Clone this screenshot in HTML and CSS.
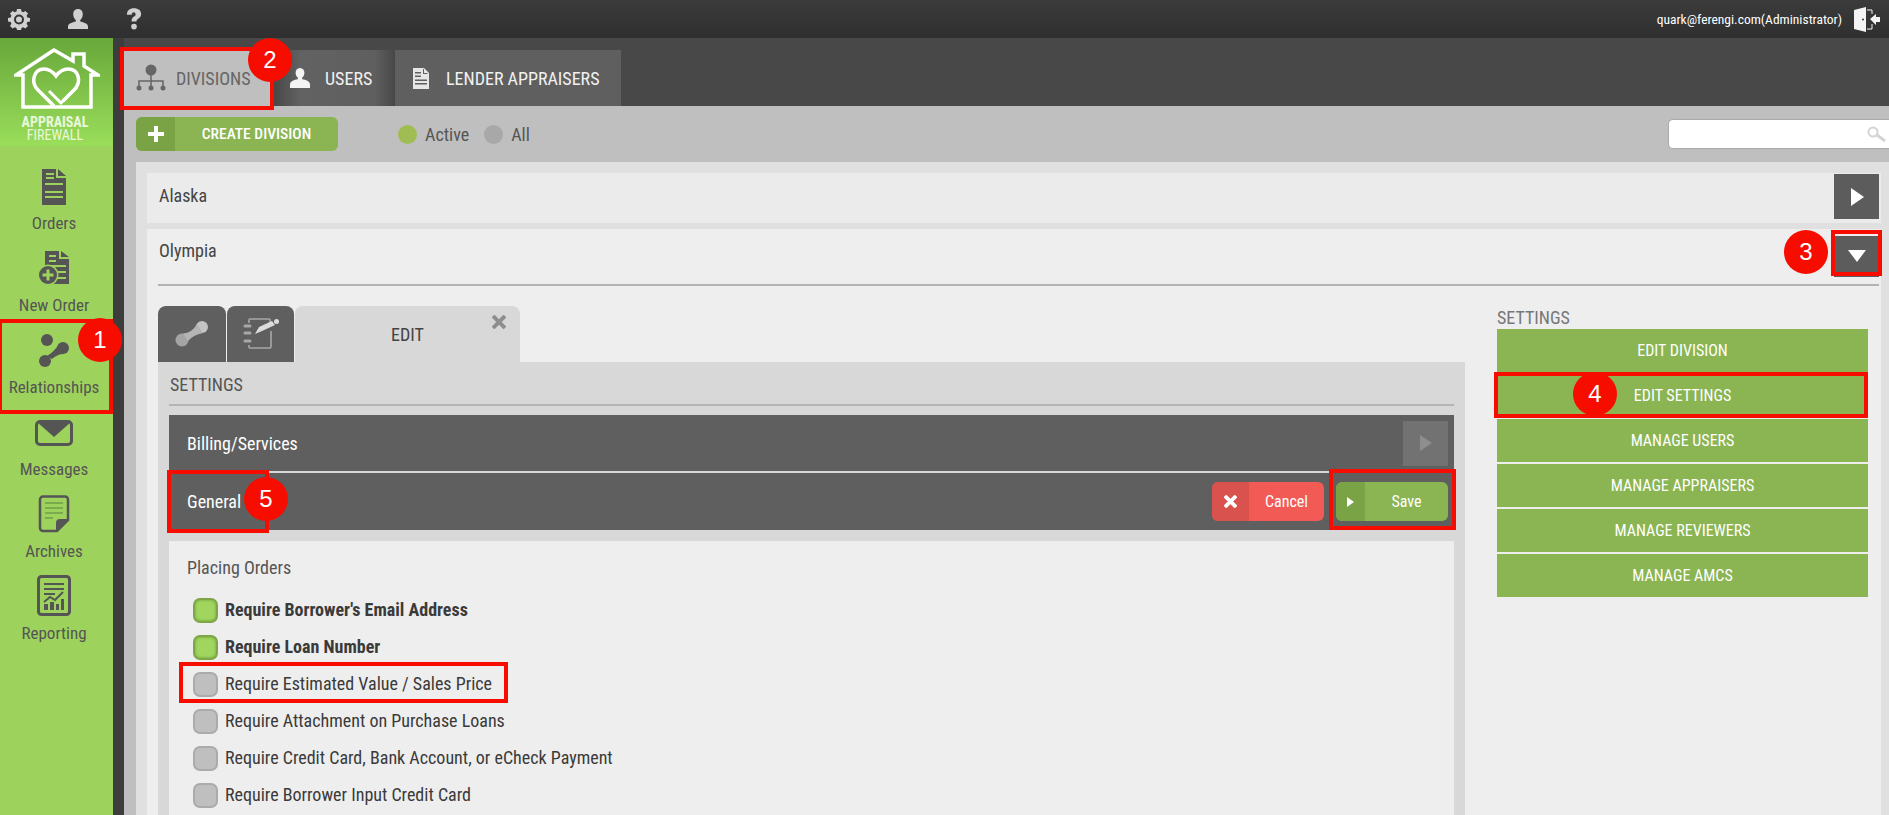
FILE: index.html
```html
<!DOCTYPE html>
<html lang="en">
<head>
<meta charset="utf-8">
<title>Appraisal Firewall - Divisions</title>
<link rel="stylesheet" href="styles.css">
</head>
<body>
<div class="page">
  <header class="topbar">
    <div class="top-icons">
      <svg class="ti" width="22" height="22" viewBox="0 0 22 22"><path fill="#d0d0d0" fill-rule="evenodd" d="M9 1h4l.5 2.600 1.700.7L17.400 3 20 5.600l-1.400 2.200.7 1.700L22 10v3.500l-2.700.5-.7 1.700L20 18l-2.600 2.600-2.200-1.400-1.700.7L13 22H9l-.5-2.100-1.700-.7L4.600 20.600 2 18l1.400-2.300-.7-1.700L0 13.500V10l2.700-.5.7-1.700L2 5.600 4.600 3l2.200 1.300 1.700-.7zM11 6.500a5 5 0 1 0 0 10 5 5 0 0 0 0-10zM11 8.500a3 3 0 1 1 0 6 3 3 0 0 1 0-6z"/></svg>
      <svg class="ti" width="22" height="22" viewBox="0 0 22 22"><path fill="#d0d0d0" d="M11 1c3.300 0 4.800 2.500 4.800 5.200 0 2.500-1.200 4.800-2.600 5.800v1.500c3.500.8 7.800 2 7.800 5v2.500H1V18.500c0-3 4.300-4.200 7.800-5V12C7.400 11 6.200 8.700 6.200 6.200 6.200 3.500 7.700 1 11 1z"/></svg>
      <svg class="ti" width="16" height="22" viewBox="0 0 18 24"><path fill="#d0d0d0" d="M9 0c5 0 8 2.500 8 6.300 0 3-1.700 4.300-3.300 5.500-1.200.9-1.900 1.500-1.900 3H6.200c0-3 1.200-4.300 2.800-5.500 1-.8 1.800-1.400 1.800-2.500S10 4.500 8.800 4.500c-1.500 0-2.300 1-2.400 2.700H1C1.100 2.600 4 0 9 0zM9 17.300a3.200 3.200 0 1 1 0 6.400 3.200 3.200 0 0 1 0-6.400z"/></svg>
    </div>
    <div class="user-info">
      <span class="user-mail">quark@ferengi.com(Administrator)</span>
      <svg width="26" height="25" viewBox="0 0 26 25"><path fill="#f4f4f4" d="M0 3 12 0v25L0 22z"/><path fill="none" stroke="#f4f4f4" stroke-width="1" d="M13 3h5v4M13 22h5v-5"/><path fill="#f4f4f4" d="M16 12l6-5v3h4v5h-4v3z"/><circle cx="9" cy="12.500" r="1" fill="#333"/></svg>
    </div>
  </header>
  <div class="shell">
    <nav class="sidebar">
      <div class="logo">
        <svg width="86" height="63" viewBox="0 0 86 63"><path fill="none" stroke="#fff" stroke-width="3.500" stroke-linejoin="miter" d="M40 3 2 28H9V60H77V28H84L70 19V7H59V14z"/><path fill="none" stroke="#fff" stroke-width="3.500" d="M40 59 24 43C16 35 20 22 30 22 35 22 39 25 42 29 45 25 49 22 54 22 65 22 68 35 60 43L49 54"/><path fill="none" stroke="#fff" stroke-width="3" d="M35 44 47 56 63 40"/></svg>
        <div class="logo-text">APPRAISAL<br>FIREWALL</div>
      </div>
      <a class="nav-item ni-orders">
        <svg width="26" height="38" viewBox="0 0 26 38"><path fill="#555" d="M1 1H15V10H25V37H1z"/><path fill="#555" d="M17 1l8 7h-8z"/><path fill="#9dd25c" d="M5 5h8v2H5zM5 9h8v2H5zM4 15h18v2H4zM4 23h18v2H4zM4 28h18v2H4z"/></svg>
        <span class="nav-label">Orders</span>
      </a>
      <a class="nav-item ni-new">
        <svg width="36" height="36" viewBox="0 0 36 36"><path fill="#555" d="M9 1H23V9H33V34H18V27H9z"/><path fill="#555" d="M25 1l8 6h-8z"/><path fill="#9dd25c" d="M13 5h7v2h-7zM13 10h7v2h-7zM13 15h17v2H13zM21 21h9v2h-9zM21 27h9v2h-9z"/><circle cx="12" cy="25" r="10.500" fill="#9dd25c"/><circle cx="12" cy="25" r="9" fill="#555"/><path fill="#9dd25c" d="M10.500 19.500h3v4h4v3h-4v4h-3v-4h-4v-3h4z"/></svg>
        <span class="nav-label">New Order</span>
      </a>
      <a class="nav-item ni-rel">
        <svg width="32" height="34" viewBox="0 0 32 34"><circle cx="9" cy="6" r="6" fill="#555"/><circle cx="25" cy="14" r="6" fill="#555"/><circle cx="7" cy="27" r="6" fill="#555"/><path fill="#555" d="M21 10c-3 5-7 9-12 12l5 3c3-3 7-5 12-5z"/></svg>
        <span class="nav-label">Relationships</span>
      </a>
      <a class="nav-item ni-msg">
        <svg width="38" height="26" viewBox="0 0 38 26"><rect x="1.500" y="1.500" width="35" height="23" rx="3.500" fill="none" stroke="#555" stroke-width="3"/><path fill="#555" d="M2 2h34L19 17z"/></svg>
        <span class="nav-label">Messages</span>
      </a>
      <a class="nav-item ni-arc">
        <svg width="32" height="38" viewBox="0 0 32 38"><path fill="none" stroke="#555" stroke-width="2.500" d="M5 1.500h22a3 3 0 0 1 3 3V25L19 36H5a3 3 0 0 1-3-3V4.500a3 3 0 0 1 3-3z"/><path fill="#555" d="M30 24 18 36V28a4 4 0 0 1 4-4z"/><path stroke="#6f9f47" stroke-width="1.500" d="M7 8h18M7 13h18M7 18h18M7 23h8"/></svg>
        <span class="nav-label">Archives</span>
      </a>
      <a class="nav-item ni-rep">
        <svg width="34" height="41" viewBox="0 0 34 41"><rect x="1.500" y="1.500" width="31" height="38" rx="3" fill="none" stroke="#555" stroke-width="3"/><path stroke="#555" stroke-width="2" d="M7 9h20M7 14h20M7 19h11"/><path fill="none" stroke="#555" stroke-width="2" d="M7 27l6-5 5 3 8-8"/><path fill="#555" d="M7 29h4v6H7zM13 27h4v8h-4zM19 29h3v6h-3zM24 24h3v11h-3z"/></svg>
        <span class="nav-label">Reporting</span>
      </a>
    </nav>
    <main class="main">
      <div class="tabs">
        <div class="tab tab-active">
          <svg width="30" height="28" viewBox="0 0 30 28"><circle cx="15" cy="6" r="5.500" fill="#666"/><path fill="none" stroke="#666" stroke-width="1.500" d="M15 11v12M3 23v-6h24v6"/><circle cx="3" cy="24" r="2.500" fill="#666"/><circle cx="15" cy="24" r="2.500" fill="#666"/><circle cx="27" cy="24" r="2.500" fill="#666"/></svg>
          <span>DIVISIONS</span>
        </div>
        <div class="tab tab-users">
          <svg width="20" height="20" viewBox="0 0 20 20"><path fill="#f4f4f4" d="M10 0c3 0 4.400 2.200 4.400 4.700 0 2.200-1 4-2.200 4.900v1.600c3.200.6 7.800 1.800 7.800 5.300V20H0v-3.500c0-3.500 4.600-4.700 7.800-5.300V9.600C6.600 8.700 5.600 6.900 5.600 4.700 5.600 2.200 7 0 10 0z"/></svg>
          <span>USERS</span>
        </div>
        <div class="tab tab-lender">
          <svg width="16" height="21" viewBox="0 0 16 21"><path fill="#e6e6e6" d="M0 0h11l5 5v16H0z"/><path fill="#5f5f5f" d="M2 4h6v1.500H2zM2 7.500h6V9H2zM2 11.500h12V13H2zM2 15h12v1.500H2zM11 1v4h4l-1 1h-4V1z"/></svg>
          <span>LENDER APPRAISERS</span>
        </div>
      </div>
      <div class="workspace">
        <div class="toolbar">
          <button class="create-btn"><span class="create-plus"><svg width="16" height="16" viewBox="0 0 16 16"><path fill="#fff" d="M6 0h4v6h6v4h-6v6H6v-6H0V6h6z"/></svg></span><span class="create-text">CREATE DIVISION</span></button>
          <div class="filter">
            <i class="dot dot-on"></i><span class="filter-label">Active</span>
            <i class="dot dot-off"></i><span class="filter-label">All</span>
          </div>
          <div class="search">
            <svg width="20" height="16" viewBox="0 0 20 16"><circle cx="6" cy="6" r="4.500" fill="none" stroke="#d4d4d4" stroke-width="2"/><path stroke="#d4d4d4" stroke-width="3" d="M10 9l8 6"/></svg>
          </div>
        </div>
        <div class="panel">
          <div class="row row-closed">
            <span class="row-name">Alaska</span>
            <span class="sq-btn"><svg width="14" height="18" viewBox="0 0 14 18"><path fill="#fff" d="M1 0l13 9-13 9z"/></svg></span>
          </div>
          <div class="row-open">
            <div class="open-head">
              <span class="row-name">Olympia</span>
              <span class="sq-btn sq-down"><svg width="18" height="12" viewBox="0 0 18 12"><path fill="#fff" d="M0 0h18L9 12z"/></svg></span>
            </div>
            <div class="open-body">
              <section class="editor">
                <div class="ed-tabs">
                  <div class="ed-tab">
                    <svg width="34" height="28" viewBox="0 0 34 28"><circle cx="27" cy="7" r="6" fill="#c4c4c4"/><circle cx="7" cy="20" r="6.500" fill="#a4a4a4"/><path fill="#b4b4b4" d="M22 4Q17 13 8 13.500L13 21Q18 15 28 13z"/></svg>
                  </div>
                  <div class="ed-tab">
                    <svg width="38" height="34" viewBox="0 0 38 34"><path fill="none" stroke="#a8a8a8" stroke-width="1.600" d="M7 6V3a1 1 0 0 1 1-1H27a1 1 0 0 1 1 1V6M29 14V30a1 1 0 0 1-1 1H8a1 1 0 0 1-1-1V28"/><path fill="none" stroke="#a8a8a8" stroke-width="3" stroke-linecap="round" d="M3 9h5M3 16h5M3 24h5"/><path fill="#dcdcdc" d="M13 17 17 10 30 4 33 8 20 14z"/><circle cx="34.500" cy="4.500" r="2.500" fill="#dcdcdc"/></svg>
                  </div>
                  <div class="ed-tab-edit">
                    <span>EDIT</span>
                    <svg class="ed-close" width="14" height="14" viewBox="0 0 14 14"><path stroke="#8e8e8e" stroke-width="4" d="M1 1l12 12M13 1 1 13"/></svg>
                  </div>
                </div>
                <div class="ed-panel">
                  <h3 class="ed-title">SETTINGS</h3>
                  <div class="bar bar-billing">
                    <span class="bar-name">Billing/Services</span>
                    <span class="sq-btn sq-off"><svg width="12" height="16" viewBox="0 0 12 16"><path fill="#8e8e8e" d="M0 0l12 8-12 8z"/></svg></span>
                  </div>
                  <div class="bar bar-general">
                    <span class="bar-name">General</span>
                    <div class="bar-actions">
                      <button class="act act-cancel"><span class="act-ico act-ico-cancel"><svg width="13" height="13" viewBox="0 0 14 14"><path stroke="#fff" stroke-width="4" d="M1 1l12 12M13 1 1 13"/></svg></span><span class="act-txt">Cancel</span></button>
                      <button class="act act-save"><span class="act-ico act-ico-save"><svg width="7" height="10" viewBox="0 0 7 10"><path fill="#fff" d="M0 0l7 5-7 5z"/></svg></span><span class="act-txt">Save</span></button>
                    </div>
                  </div>
                  <div class="orders">
                    <div class="orders-title">Placing Orders</div>
                    <label class="check on"><i></i>Require Borrower's Email Address</label>
                    <label class="check on"><i></i>Require Loan Number</label>
                    <label class="check"><i></i>Require Estimated Value / Sales Price</label>
                    <label class="check"><i></i>Require Attachment on Purchase Loans</label>
                    <label class="check"><i></i>Require Credit Card, Bank Account, or eCheck Payment</label>
                    <label class="check"><i></i>Require Borrower Input Credit Card</label>
                  </div>
                </div>
              </section>
              <aside class="side">
                <div class="side-title">SETTINGS</div>
                <a class="side-btn">EDIT DIVISION</a>
                <a class="side-btn">EDIT SETTINGS</a>
                <a class="side-btn">MANAGE USERS</a>
                <a class="side-btn">MANAGE APPRAISERS</a>
                <a class="side-btn">MANAGE REVIEWERS</a>
                <a class="side-btn">MANAGE AMCS</a>
              </aside>
            </div>
          </div>
        </div>
      </div>
    </main>
  </div>
  <div class="notes">
    <i class="frame f1"></i>
    <i class="frame f2"></i>
    <i class="frame f3"></i>
    <b class="num n4">4</b>
    <i class="frame f4"></i>
    <i class="frame f5"></i>
    <i class="frame f6"></i>
    <i class="frame f7"></i>
    <b class="num n1">1</b>
    <b class="num n2">2</b>
    <b class="num n3">3</b>
    <b class="num n5">5</b>
  </div>
</div>
</body>
</html>
```
FILE: styles.css
```css
* { box-sizing: border-box; }
html, body { margin: 0; height: 100%; overflow: hidden; }
body { font-family: "Roboto Condensed", Roboto, sans-serif; font-stretch: 75%; font-size: 16px; color: #444; }
svg { display: block; flex: none; }
button { font: inherit; font-stretch: inherit; border: 0; padding: 0; }
.page { position: relative; width: 1889px; height: 815px; display: flex; flex-direction: column; overflow: hidden; }

.topbar { height: 38px; flex: none; display: flex; align-items: center; justify-content: space-between; background: linear-gradient(#3b3b3b, #2f2f2f); padding: 0 9px 0 8px; }
.top-icons { display: flex; align-items: center; gap: 37px; }
.user-info { display: flex; align-items: center; gap: 12px; color: #fff; font-size: 13.500px; }
.user-mail { display: block; }

.shell { flex: 1; display: flex; min-height: 0; }
.sidebar { width: 124px; flex: none; background: #9dd25c; border-right: 11px solid #3d3d3d; display: flex; flex-direction: column; }
.logo { height: 108px; flex: none; background: linear-gradient(#68a73a, #9ade5b); display: flex; flex-direction: column; align-items: center; padding-top: 9px; }
.logo-text { color: #eaf8dc; font-size: 14px; line-height: 12.500px; font-weight: 400; text-align: center; margin-top: 6px; padding-right: 3px; }
.logo-text::first-line { font-weight: 700; }
.nav-item { height: 82px; display: flex; flex-direction: column; align-items: center; justify-content: flex-end; padding-right: 5px; }
.nav-item svg { margin-bottom: 9px; }
.ni-orders svg { margin-bottom: 7px; }
.ni-msg svg { margin-bottom: 13px; }
.ni-arc svg { margin-bottom: 8px; }
.ni-rep svg { margin-bottom: 7px; }
.nav-label { font-size: 17px; line-height: 20px; color: #555; margin-bottom: -5px; }

.main { flex: 1; min-width: 0; display: flex; flex-direction: column; background: #484848; }
.tabs { height: 68px; flex: none; padding-top: 12px; display: flex; }
.tab { height: 56px; display: flex; align-items: center; font-size: 18px; color: #f1f1f1; background: #5f5f5f; }
.tab-active { width: 146px; background: #bfbfbf; color: #666; padding-left: 12px; gap: 10px; }
.tab-users { width: 123px; padding-left: 20px; gap: 15px; background: linear-gradient(90deg, #444, #626262 25%, #5f5f5f 85%, #4a4a4a); }
.tab-lender { width: 226px; margin-left: 2px; padding-left: 18px; gap: 17px; }

.workspace { flex: 1; background: #bfbfbf; display: flex; flex-direction: column; min-height: 0; }
.toolbar { height: 56px; flex: none; display: flex; align-items: center; padding-left: 12px; }
.create-btn { width: 202px; height: 34px; display: flex; background: #8bb553; border-radius: 6px; overflow: hidden; color: #fff; }
.create-plus { width: 39px; background: #7aa345; display: flex; align-items: center; justify-content: center; }
.create-text { flex: 1; text-align: center; line-height: 34px; font-size: 15.500px; font-weight: 500; }
.filter { margin-left: 60px; display: flex; align-items: center; }
.dot { width: 19px; height: 19px; border-radius: 50%; display: block; }
.dot-on { background: #a0bd54; }
.dot-off { background: #a8a8a8; margin-left: 15px; }
.filter-label { font-size: 18px; margin-left: 8px; color: #555; }
.search { margin-left: auto; width: 221px; height: 30px; background: #fff; border: 1px solid #aaa; border-right: 0; border-radius: 5px 0 0 5px; display: flex; align-items: center; justify-content: flex-end; padding-right: 2px; }

.panel { flex: 1; margin-left: 12px; background: #e0e0e0; padding: 11px 8px 0 11px; display: flex; flex-direction: column; gap: 6px; min-height: 0; }
.row-name { font-size: 18px; color: #444; }
.row-closed { height: 50px; flex: none; background: #ebebeb; display: flex; align-items: center; justify-content: space-between; padding: 0 2px 3px 12px; }
.row-closed .row-name { margin-bottom: 2px; }
.sq-btn { width: 45px; height: 45px; background: #5c5c5c; display: flex; align-items: center; justify-content: center; }
.row-open { flex: 1; background: #eee; padding: 0 2px 0 11px; min-height: 0; }
.open-head { height: 57px; display: flex; align-items: center; justify-content: space-between; border-bottom: 2px solid #b3b3b3; padding: 0 0 12px 1px; }
.sq-down { height: 41px; margin-top: 11px; }
.open-body { display: flex; padding-top: 20px; }

.editor { width: 1307px; flex: none; }
.ed-tabs { display: flex; height: 56px; gap: 1px; }
.ed-tab { width: 68px; background: #5f5f5f; border-radius: 8px 8px 0 0; display: flex; align-items: center; justify-content: center; }
.ed-tab + .ed-tab { width: 67px; }
.ed-tab-edit { width: 225px; background: #d8d8d8; border-radius: 8px 8px 0 0; position: relative; display: flex; align-items: center; justify-content: center; font-size: 18px; color: #444; }
.ed-close { position: absolute; right: 14px; top: 9px; }
.ed-panel { background: #d8d8d8; padding: 0 11px; height: 500px; }
.ed-title { margin: 0; height: 44px; border-bottom: 2px solid #b5b5b5; font-size: 18px; font-weight: 400; line-height: 46px; color: #555; padding-left: 1px; }
.bar { background: #5f5f5f; display: flex; align-items: center; justify-content: space-between; color: #fff; padding: 0 6px 0 18px; }
.bar-billing { height: 56px; margin-top: 9px; }
.bar-general { height: 57px; margin-top: 2px; }
.bar-name { font-size: 18px; font-weight: 400; }
.sq-off { background: #727272; }
.bar-actions { display: flex; gap: 12px; }
.act { width: 112px; height: 39px; border-radius: 6px; overflow: hidden; display: flex; color: #fff; font-size: 16px; font-weight: 400; }
.act-ico { display: flex; align-items: center; justify-content: center; }
.act-txt { flex: 1; line-height: 39px; text-align: center; }
.act-cancel { background: #f25a55; }
.act-ico-cancel { width: 37px; background: #d9524e; }
.act-save { background: #8bb553; }
.act-ico-save { width: 29px; background: #7aa345; }
.orders { margin-top: 11px; background: #eee; height: 300px; padding: 16px 18px; }
.orders-title { font-size: 18px; line-height: 22px; color: #555; margin-bottom: 19px; }
.check { height: 37px; display: flex; align-items: flex-start; font-size: 18px; line-height: 23px; color: #3a3a3a; margin-left: 6px; }
.check i { width: 25px; height: 25px; margin-right: 7px; border-radius: 7px; border: 2px solid #ababab; background: #bfbfbf; display: block; flex: none; }
.check.on { font-weight: 700; }
.check.on i { background: #a0d65e; border-color: #7ea647; box-shadow: inset 0 0 3px #6d9a3c; }

.side { margin-left: 32px; width: 371px; flex: none; }
.side-title { height: 23px; font-size: 18px; line-height: 24px; color: #777; }
.side-btn { display: block; height: 43px; margin-bottom: 2px; background: #8bb553; color: #fff; text-align: center; font-size: 16px; font-weight: 400; line-height: 43px; }

.notes { position: absolute; inset: 0; pointer-events: none; }
.frame { position: absolute; border: 4px solid #f70d00; display: block; }
.f1 { left: -2px; top: 319px; width: 115px; height: 95px; }
.f2 { left: 120px; top: 47px; width: 154px; height: 63px; }
.f3 { left: 1831px; top: 230px; width: 51px; height: 46px; }
.f4 { left: 1494px; top: 372px; width: 374px; height: 46px; }
.f5 { left: 167px; top: 470px; width: 102px; height: 63px; }
.f6 { left: 1329px; top: 469px; width: 127px; height: 61px; }
.f7 { left: 179px; top: 662px; width: 329px; height: 41px; }
.num { position: absolute; width: 44px; height: 44px; border-radius: 50%; background: #f70d00; color: #fff; font: 400 24px/44px "Liberation Sans", sans-serif; text-align: center; }
.n1 { left: 78px; top: 318px; }
.n2 { left: 248px; top: 38px; }
.n3 { left: 1784px; top: 230px; }
.n4 { left: 1573px; top: 372px; }
.n5 { left: 244px; top: 477px; }
```
